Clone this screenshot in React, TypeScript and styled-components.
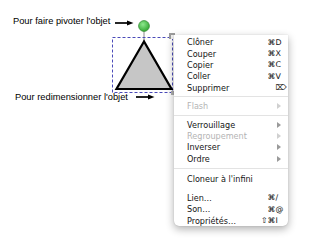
import React from "react";
import styled, { createGlobalStyle } from "styled-components";

const GlobalStyle = createGlobalStyle`
  html, body { margin: 0; padding: 0; background: #ffffff; }
  body { font-family: "Liberation Sans", Arial, sans-serif; }
`;

const Canvas = styled.div`
  position: relative;
  width: 309px;
  height: 241px;
  overflow: hidden;
  background: #ffffff;
`;

const Drawing = styled.svg`
  position: absolute;
  left: 0;
  top: 0;
`;

const Annotation = styled.div<{ $x: number; $y: number; $gap: number }>`
  position: absolute;
  left: ${(p) => p.$x}px;
  top: ${(p) => p.$y}px;
  display: flex;
  align-items: center;
  gap: ${(p) => p.$gap}px;
  font-family: "Liberation Sans", Arial, sans-serif;
  font-size: 9.3px;
  line-height: 11px;
  color: #000;
  white-space: nowrap;
`;

const ArrowSvg = styled.svg<{ $dy: number }>`
  display: block;
  margin-top: ${(p) => p.$dy}px;
`;

const Menu = styled.div`
  position: absolute;
  left: 174px;
  top: 35px;
  width: 114px;
  padding: 1.5px 0 0 0;
  background: #ffffff;
  border-radius: 0 0 5px 5px;
  box-shadow: 0 3px 8px rgba(0, 0, 0, 0.32), 0 0 1px rgba(0, 0, 0, 0.25);
  font-family: "DejaVu Sans", Verdana, sans-serif;
  font-size: 8.1px;
  color: #111;
  box-sizing: border-box;
`;

const Row = styled.div<{ $disabled?: boolean }>`
  height: 11.4px;
  display: flex;
  align-items: center;
  justify-content: space-between;
  padding: 0 6px 0 13px;
  color: ${(p) => (p.$disabled ? "#b4b4b4" : "#141414")};
  white-space: nowrap;
`;

const Label = styled.span`
  display: block;
`;

const Shortcut = styled.span`
  display: inline-flex;
  align-items: center;
  font-size: 7.9px;
  color: #111;
`;

const Mods = styled.span`
  text-align: right;
`;

const Key = styled.span`
  display: inline-block;
  width: 6.5px;
  text-align: left;
  overflow: visible;
`;

const SubArrow = styled.span<{ $disabled?: boolean }>`
  display: block;
  width: 0;
  height: 0;
  margin-right: 1px;
  border-top: 3px solid transparent;
  border-bottom: 3px solid transparent;
  border-left: 4.5px solid ${(p) => (p.$disabled ? "#d0d0d0" : "#9a9a9a")};
`;

const Separator = styled.div<{ $h: number; $line: boolean }>`
  height: ${(p) => p.$h}px;
  display: flex;
  align-items: center;
  &::after {
    content: "";
    display: block;
    width: 100%;
    height: 1px;
    background: ${(p) => (p.$line ? "#e3e3e3" : "transparent")};
  }
`;

type Item =
  | { kind: "item"; label: string; mods?: string; key?: string; sub?: boolean; disabled?: boolean }
  | { kind: "sep"; h: number; line: boolean };

const items: Item[] = [
  { kind: "item", label: "Clôner", mods: "⌘", key: "D" },
  { kind: "item", label: "Couper", mods: "⌘", key: "X" },
  { kind: "item", label: "Copier", mods: "⌘", key: "C" },
  { kind: "item", label: "Coller", mods: "⌘", key: "V" },
  { kind: "item", label: "Supprimer", mods: "", key: "⌦" },
  { kind: "sep", h: 7, line: true },
  { kind: "item", label: "Flash", sub: true, disabled: true },
  { kind: "sep", h: 7, line: true },
  { kind: "item", label: "Verrouillage", sub: true },
  { kind: "item", label: "Regroupement", sub: true, disabled: true },
  { kind: "item", label: "Inverser", sub: true },
  { kind: "item", label: "Ordre", sub: true },
  { kind: "sep", h: 9, line: true },
  { kind: "item", label: "Cloneur à l'infini" },
  { kind: "sep", h: 7.5, line: false },
  { kind: "item", label: "Lien…", mods: "⌘", key: "/" },
  { kind: "item", label: "Son…", mods: "⌘", key: "@" },
  { kind: "item", label: "Propriétés…", mods: "⇧⌘", key: "I" },
];

const Arrow: React.FC<{ dy: number }> = ({ dy }) => (
  <ArrowSvg $dy={dy} width="19" height="6" viewBox="0 0 19 6">
    <line x1="0" y1="3" x2="13" y2="3" stroke="#000" strokeWidth="1.7" />
    <polygon points="12,0.6 18.5,3 12,5.4" fill="#000" />
  </ArrowSvg>
);

export default function App() {
  return (
    <>
      <GlobalStyle />
      <Canvas>
        <Drawing width="180" height="100" viewBox="0 0 180 100">
          <defs>
            <radialGradient id="g" cx="40%" cy="35%" r="70%">
              <stop offset="0%" stopColor="#8ee88e" />
              <stop offset="100%" stopColor="#2ea42e" />
            </radialGradient>
          </defs>
          <line x1="144" y1="31" x2="144" y2="41" stroke="#8a8a8a" strokeWidth="1" />
          <circle cx="144" cy="26" r="5.4" fill="url(#g)" stroke="#3a8f3a" strokeWidth="0.8" />
          <rect
            x="112.5"
            y="37.5"
            width="60"
            height="55"
            fill="none"
            stroke="#4a4ab8"
            strokeWidth="1"
            strokeDasharray="3 2"
          />
          <polygon
            points="144,41.5 116.5,89 171.5,89"
            fill="#c6c6c6"
            stroke="#000"
            strokeWidth="2.2"
            strokeLinejoin="miter"
          />
          <rect x="169" y="33" width="6" height="6" fill="#9c9c9c" />
          <rect x="171" y="35" width="4" height="4" fill="#f2f2f2" />
          <rect x="171" y="91" width="3" height="4" fill="#b0b0b0" />
        </Drawing>

        <Annotation $x={13} $y={15.5} $gap={5}>
          <span>Pour faire pivoter l'objet</span>
          <Arrow dy={3} />
        </Annotation>

        <Annotation $x={15} $y={91.5} $gap={8}>
          <span>Pour redimensionner l'objet</span>
          <Arrow dy={-1} />
        </Annotation>

        <Menu>
          {items.map((it, i) =>
            it.kind === "sep" ? (
              <Separator key={i} $h={it.h} $line={it.line} />
            ) : (
              <Row key={i} $disabled={it.disabled}>
                <Label>{it.label}</Label>
                {it.sub ? (
                  <SubArrow $disabled={it.disabled} />
                ) : it.key ? (
                  <Shortcut>
                    <Mods>{it.mods}</Mods>
                    <Key>{it.key}</Key>
                  </Shortcut>
                ) : null}
              </Row>
            )
          )}
        </Menu>
      </Canvas>
    </>
  );
}
